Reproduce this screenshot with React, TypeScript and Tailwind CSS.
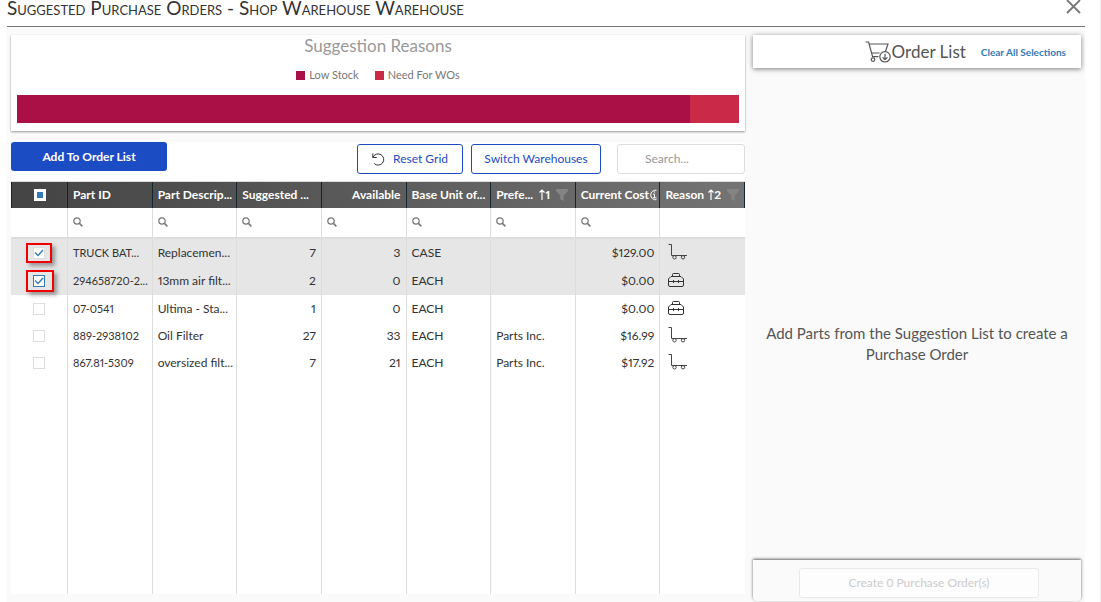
import type { ReactNode } from 'react';

type Reason = 'stock' | 'workOrder';

interface Part {
  id: string;
  description: string;
  suggested: number;
  available: number;
  unit: string;
  vendor: string;
  cost: string;
  reason: Reason;
  selected: boolean;
}

const parts: Part[] = [
  { id: 'TRUCK BAT...', description: 'Replacemen...', suggested: 7, available: 3, unit: 'CASE', vendor: '', cost: '$129.00', reason: 'stock', selected: true },
  { id: '294658720-2...', description: '13mm air filt...', suggested: 2, available: 0, unit: 'EACH', vendor: '', cost: '$0.00', reason: 'workOrder', selected: true },
  { id: '07-0541', description: 'Ultima - Sta...', suggested: 1, available: 0, unit: 'EACH', vendor: '', cost: '$0.00', reason: 'workOrder', selected: false },
  { id: '889-2938102', description: 'Oil Filter', suggested: 27, available: 33, unit: 'EACH', vendor: 'Parts Inc.', cost: '$16.99', reason: 'stock', selected: false },
  { id: '867.81-5309', description: 'oversized filt...', suggested: 7, available: 21, unit: 'EACH', vendor: 'Parts Inc.', cost: '$17.92', reason: 'stock', selected: false },
];

const reasons = [
  { label: 'Low Stock', share: 93.2, color: 'bg-[#aa1046]' },
  { label: 'Need For WOs', share: 6.8, color: 'bg-[#ca2a48]' },
];

function DollyIcon() {
  return (
    <svg width="20" height="16" viewBox="0 0 20 16" fill="none" stroke="#444" aria-label="Low Stock" role="img">
      <path d="M0.5 0.5H3.5V11.5H19" />
      <circle cx="6.5" cy="13.3" r="1.7" />
      <circle cx="15" cy="13.3" r="1.7" />
    </svg>
  );
}

function ToolboxIcon() {
  return (
    <svg width="16" height="14" viewBox="0 0 16 14" fill="none" stroke="#333" aria-label="Need For WOs" role="img">
      <path d="M4.5 3V1.5Q4.5 0.5 5.5 0.5H10.5Q11.5 0.5 11.5 1.5V3" />
      <path d="M3 3.5H13L15.5 6V12Q15.5 13.5 14 13.5H2Q0.5 13.5 0.5 12V6Z" />
      <path d="M0.5 8.5H15.5M5.5 7V10M10.5 7V10" />
    </svg>
  );
}

function CartIcon() {
  return (
    <svg width="27" height="22" viewBox="0 0 27 22" fill="none" stroke="#555" strokeWidth="1.2" aria-hidden="true">
      <path d="M0.5 1H3.6L7.6 15.6H13.4M4.2 3H23L20.6 10M6.6 12H14.5" />
      <circle cx="8" cy="18.6" r="1.8" />
      <circle cx="20" cy="15.8" r="5.2" />
      <path d="M20 12.8V18.6M17.6 16.3L20 18.7L22.4 16.3" />
    </svg>
  );
}

function SearchIcon() {
  return (
    <svg className="shrink-0" width="10" height="10" viewBox="0 0 10 10" fill="none" stroke="#777" strokeWidth="1.2" aria-hidden="true">
      <circle cx="4" cy="4" r="3.2" />
      <path d="M6.4 6.4L9.4 9.4" strokeWidth="1.5" />
    </svg>
  );
}

function FunnelIcon() {
  return (
    <svg className="shrink-0" width="12" height="12" viewBox="0 0 12 12" fill="#848484" aria-hidden="true">
      <path d="M0 0H12V2L7.8 6.5V12L4.2 10V6.5L0 2Z" />
    </svg>
  );
}

function SortMark({ order }: { order: number }) {
  return (
    <span className="flex shrink-0 items-center">
      <svg width="6" height="11" viewBox="0 0 6 11" fill="none" stroke="#fff" strokeWidth="1.2" aria-hidden="true">
        <path d="M3 11V1M0.5 3.5L3 1L5.5 3.5" />
      </svg>
      {order}
    </span>
  );
}

function InfoIcon() {
  return (
    <svg className="shrink-0" width="8" height="12" viewBox="1 0 8 12" fill="none" stroke="#fff" aria-hidden="true">
      <path d="M8.5 1.3A4.8 4.8 0 1 0 8.5 10.7" />
      <path d="M5 5.2H6.5V8.7M4.8 8.8H8.5M5.8 3H7.2" />
    </svg>
  );
}

function HeaderCell({ children, end = false }: { children: ReactNode; end?: boolean }) {
  return (
    <th scope="col" className="h-[26px] border-r border-[#14252c] p-0 pb-px pl-[5px] font-bold">
      <div className={end ? 'flex items-center justify-end pr-[5px] whitespace-nowrap' : 'flex items-center whitespace-nowrap'}>
        {children}
      </div>
    </th>
  );
}

function RowCheckbox({ label, checked, focused }: { label: string; checked: boolean; focused: boolean }) {
  return (
    <span className="relative inline-flex size-3 align-middle">
      <input
        type="checkbox"
        aria-label={label}
        defaultChecked={checked}
        className={
          focused
            ? 'peer size-3 appearance-none border border-[#337ab7] bg-white'
            : 'peer size-3 appearance-none border border-[#ddd] bg-white'
        }
      />
      <svg className="pointer-events-none absolute inset-0 hidden peer-checked:block" width="12" height="12" viewBox="0 0 12 12" fill="none" stroke="#337ab7" strokeWidth="1.4" aria-hidden="true">
        <path d="M2 5.5L5 8.5L10 3" />
      </svg>
      {checked && (
        <span
          className={
            focused
              ? 'pointer-events-none absolute -top-[5px] -right-[9px] -bottom-[5px] -left-[7px] border-2 border-[#f00000] shadow-[3px_3px_4px_rgba(0,0,0,0.35)]'
              : 'pointer-events-none absolute -inset-x-[7px] -inset-y-1 border-2 border-[#f00000] shadow-[3px_3px_4px_rgba(0,0,0,0.35)]'
          }
        />
      )}
    </span>
  );
}

function PartsGrid() {
  const filters = ['Part ID', 'Part Description', 'Suggested Quantity', 'Available', 'Base Unit of Measure', 'Preferred Vendor', 'Current Cost'];
  const cell = 'border-r border-[#ddd] p-0 px-[5px] whitespace-nowrap';
  const numberCell = 'border-r border-[#ddd] p-0 px-[5px] text-right whitespace-nowrap';

  return (
    <table className="w-full grow table-fixed border-separate border-spacing-0 text-left text-[12px] leading-4 text-[#333] proportional-nums">
      <colgroup>
        <col className="w-[57px]" />
        <col span={8} />
      </colgroup>
      <thead className="text-white">
        <tr className="bg-linear-to-r from-[#444] to-[#747474]">
          <th scope="col" className="h-[26px] border-r border-l border-[#14252c] p-0 pb-px text-center">
            <span className="relative inline-flex size-3 align-middle">
              <input type="checkbox" aria-label="Select all parts" className="size-3 appearance-none bg-white" />
              <span className="pointer-events-none absolute inset-[3px] bg-[#337ab7]" />
            </span>
          </th>
          <HeaderCell>Part ID</HeaderCell>
          <HeaderCell>Part Descrip...</HeaderCell>
          <HeaderCell>Suggested ...</HeaderCell>
          <HeaderCell end>Available</HeaderCell>
          <HeaderCell>Base Unit of...</HeaderCell>
          <HeaderCell>
            <span className="mr-1.5">Prefe...</span>
            <SortMark order={1} />
            <span className="ml-1.5"><FunnelIcon /></span>
          </HeaderCell>
          <HeaderCell>
            Current Cost
            <InfoIcon />
          </HeaderCell>
          <HeaderCell>
            <span className="mr-1">Reason</span>
            <SortMark order={2} />
            <span className="ml-1.5"><FunnelIcon /></span>
          </HeaderCell>
        </tr>
      </thead>
      <tbody>
        <tr className="bg-white">
          <td className="h-[31px] border-r border-b-2 border-[#ddd] p-0" />
          {filters.map((name) => (
            <td key={name} className="border-r border-b-2 border-[#ddd] p-0 px-[5px] pb-0.5">
              <label className="flex items-center gap-1">
                <SearchIcon />
                <input type="text" aria-label={'Filter ' + name} className="w-full min-w-0 bg-transparent outline-none" />
              </label>
            </td>
          ))}
          <td className="border-b-2 border-[#ddd] p-0" />
        </tr>
        {parts.map((part, index) => (
          <tr key={part.id} className={part.selected ? 'h-7 bg-[#e6e6e6]' : 'h-[27px] bg-white'}>
            <td className="border-r border-[#ddd] p-0 pb-0.5 text-center">
              <RowCheckbox label={'Select ' + part.id} checked={part.selected} focused={index === 1} />
            </td>
            <td className="border-r border-[#ddd] p-0 px-[5px] text-[11px] whitespace-nowrap">{part.id}</td>
            <td className={cell}>{part.description}</td>
            <td className={numberCell}>{part.suggested}</td>
            <td className={numberCell}>{part.available}</td>
            <td className={cell}>{part.unit}</td>
            <td className={cell}>{part.vendor}</td>
            <td className={numberCell}>{part.cost}</td>
            <td className="p-0 pb-0.5 pl-2">{part.reason === 'stock' ? <DollyIcon /> : <ToolboxIcon />}</td>
          </tr>
        ))}
        <tr className="h-[217px] bg-white" aria-hidden="true">
          {Array.from({ length: 8 }, (_, i) => (
            <td key={i} className="border-r border-[#ddd] p-0" />
          ))}
          <td className="p-0" />
        </tr>
      </tbody>
    </table>
  );
}

export default function App() {
  return (
    <div className="flex min-h-screen flex-col border-r border-[#eee] bg-white pr-[15px] pl-[7px] font-['Lato',sans-serif] text-[#333]">
      <header className="flex h-[27px] items-start justify-between border-b border-[#777]">
        <h1 className="text-[19px] leading-4 whitespace-nowrap [font-variant-caps:small-caps]">
          Suggested Purchase Orders - Shop Warehouse Warehouse
        </h1>
        <button type="button" aria-label="Close" className="mr-1">
          <svg width="15" height="14" viewBox="0 0 15 14" stroke="#777" strokeWidth="1.8" aria-hidden="true">
            <path d="M1 0L14 13M14 0L1 13" />
          </svg>
        </button>
      </header>

      <main className="flex grow gap-2 bg-[#fafafa] pr-1 pl-1">
        <section className="flex min-w-0 grow flex-col pt-2 pb-2">
          <div className="mb-[11px] flex h-24 flex-col bg-white px-1.5 shadow-[0_1px_2px_rgba(0,0,0,0.4)]">
            <h2 className="pt-px text-center text-[17px] leading-5 text-[#999]">Suggestion Reasons</h2>
            <ul className="mt-[11px] flex justify-center gap-4 text-[11px] leading-4 text-[#777]">
              {reasons.map((reason) => (
                <li key={reason.label} className="flex items-center gap-1">
                  <span className={'size-[9px] ' + reason.color} />
                  {reason.label}
                </li>
              ))}
            </ul>
            <div className="mt-3 flex h-7">
              {reasons.map((reason) => (
                <div key={reason.label} className={reason.color} style={{ width: reason.share + '%' }} />
              ))}
            </div>
          </div>

          <div className="flex grow flex-col bg-white">
            <div className="flex h-[39px] items-start text-[12px] leading-4">
              <button type="button" className="h-[29px] w-[156px] rounded-[3px] bg-[#1c4cc4] font-bold text-white">
                Add To Order List
              </button>
              <div className="ml-auto flex gap-2 pt-0.5 text-[#1c4cc4]">
                <button type="button" className="flex h-[30px] w-[106px] items-center justify-center gap-2 rounded-[3px] border border-[#1c4cc4] bg-white">
                  <svg width="13" height="13" viewBox="0 0 13 13" fill="none" stroke="#333" aria-hidden="true">
                    <path d="M0.8 0.5V4.5H4.8M1 4.3A5.6 5.6 0 1 1 2.2 10.5" />
                  </svg>
                  Reset Grid
                </button>
                <button type="button" className="h-[30px] w-[130px] rounded-[3px] border border-[#1c4cc4] bg-white">
                  Switch Warehouses
                </button>
                <input
                  type="search"
                  aria-label="Search"
                  placeholder="Search..."
                  className="ml-2 h-[30px] w-32 rounded-[3px] border border-[#ddd] bg-white pb-0.5 pl-[27px] text-[#333] placeholder:text-[#999]"
                />
              </div>
            </div>
            <div className="flex grow flex-col border-t border-[#ddd]">
              <PartsGrid />
            </div>
          </div>
        </section>

        <aside className="flex w-[328px] shrink-0 flex-col pt-2">
          <div className="flex h-[33px] items-center justify-end bg-white pr-[15px] shadow-[0_1px_5px_rgba(0,0,0,0.5)]">
            <CartIcon />
            <h2 className="mr-[15px] text-[17px] leading-5 text-[#555]">Order List</h2>
            <a href="#clear" className="text-[10px] leading-4 font-bold text-[#337ab7]">Clear All Selections</a>
          </div>
          <p className="flex grow items-center justify-center pt-[60px] text-center text-[15px] leading-[21px] text-[#555]">
            Add Parts from the Suggestion List to create a Purchase Order
          </p>
          <footer className="mb-px flex h-[41px] items-center justify-center rounded-b bg-[#fafafa] pt-1 pl-1 shadow-[0_-1px_3px_rgba(0,0,0,0.6)]">
            <button type="button" disabled className="h-[30px] w-60 rounded-[3px] border border-[#e9e9e9] bg-[#fdfdfd] text-[12px] leading-4 text-[#ccc]">
              Create 0 Purchase Order(s)
            </button>
          </footer>
        </aside>
      </main>
    </div>
  );
}
